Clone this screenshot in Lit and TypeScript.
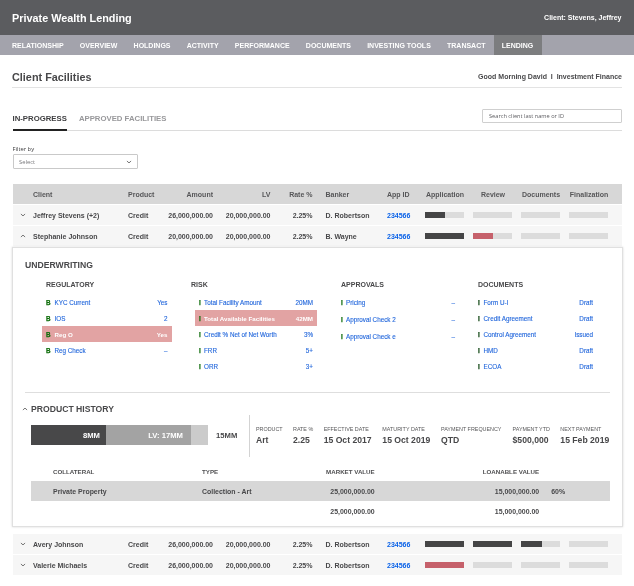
import { LitElement, html, css, svg } from "lit";
import { customElement } from "lit/decorators.js";
import { classMap } from "lit/directives/class-map.js";

interface Stage { fill: number; alert?: boolean }
interface Facility {
  client: string; product: string; amount: string; lv: string; rate: string;
  banker: string; id: string; open?: boolean; stages: Stage[];
}
interface Check { mark: string; label: string; value: string; alert?: boolean }
interface Group { title: string; kind: string; items: Check[] }

const none: Stage = { fill: 0 };

const facilities: Facility[] = [
  { client: "Jeffrey Stevens (+2)", product: "Credit", amount: "26,000,000.00", lv: "20,000,000.00", rate: "2.25%", banker: "D. Robertson", id: "234566", stages: [{ fill: 52 }, none, none, none] },
  { client: "Stephanie Johnson", product: "Credit", amount: "20,000,000.00", lv: "20,000,000.00", rate: "2.25%", banker: "B. Wayne", id: "234566", open: true, stages: [{ fill: 100 }, { fill: 52, alert: true }, none, none] },
  { client: "Avery Johnson", product: "Credit", amount: "26,000,000.00", lv: "20,000,000.00", rate: "2.25%", banker: "D. Robertson", id: "234566", stages: [{ fill: 100 }, { fill: 100 }, { fill: 53 }, none] },
  { client: "Valerie Michaels", product: "Credit", amount: "26,000,000.00", lv: "20,000,000.00", rate: "2.25%", banker: "D. Robertson", id: "234566", stages: [{ fill: 100, alert: true }, none, none, none] },
];

const groups: Group[] = [
  { title: "REGULATORY", kind: "regulatory", items: [
    { mark: "B", label: "KYC Current", value: "Yes" },
    { mark: "B", label: "IOS", value: "2" },
    { mark: "B", label: "Reg O", value: "Yes", alert: true },
    { mark: "B", label: "Reg Check", value: "–" },
  ] },
  { title: "RISK", kind: "risk", items: [
    { mark: "I", label: "Total Facility Amount", value: "20MM" },
    { mark: "I", label: "Total Available Facilities", value: "42MM", alert: true },
    { mark: "I", label: "Credit % Net of Net Worth", value: "3%" },
    { mark: "I", label: "FRR", value: "5+" },
    { mark: "I", label: "ORR", value: "3+" },
  ] },
  { title: "APPROVALS", kind: "approvals", items: [
    { mark: "I", label: "Pricing", value: "–" },
    { mark: "I", label: "Approval Check 2", value: "–" },
    { mark: "I", label: "Approval Check e", value: "–" },
  ] },
  { title: "DOCUMENTS", kind: "documents", items: [
    { mark: "I", label: "Form U-I", value: "Draft" },
    { mark: "I", label: "Credit Agreement", value: "Draft" },
    { mark: "I", label: "Control Agreement", value: "Issued" },
    { mark: "I", label: "HMD", value: "Draft" },
    { mark: "I", label: "ECOA", value: "Draft" },
  ] },
];

const facts = [
  ["PRODUCT", "Art"], ["RATE %", "2.25"], ["EFFECTIVE DATE", "15 Oct 2017"],
  ["MATURITY DATE", "15 Oct 2019"], ["PAYMENT FREQUENCY", "QTD"],
  ["PAYMENT YTD", "$500,000"], ["NEXT PAYMENT", "15 Feb 2019"],
];

const chevron = (up = false) => html`<svg class="chevron" width="6" height="4" viewBox="0 0 6 4">
  ${svg`<path d=${up ? "M0.9 3 L3 1.1 L5.1 3" : "M0.9 1 L3 2.9 L5.1 1"} fill="none" stroke="#5c5c5c" stroke-width="0.85"/>`}
</svg>`;

@customElement("app-root")
export class AppRoot extends LitElement {
  static styles = css`
    :host {
      display: block; height: 586px; overflow: hidden; background: #fff; color: #48484a;
      font: bold 7px/10px "Liberation Sans", Arial, sans-serif; white-space: nowrap;
    }
    * { box-sizing: border-box; }
    .top { height: 35px; background: #5b5c5f; color: #fff; display: flex; justify-content: space-between; align-items: center; padding: 0 12.5px 0 12px; }
    .brand { font-size: 10.85px; line-height: 14px; }
    .top, .nav { filter: brightness(1); }
    .nav { height: 20px; background: #a3a3ac; color: #fff; display: flex; padding-left: 12px; }
    .nav span { line-height: 21px; margin-right: 16.2px; }
    .nav .current { background: #7c7d7f; margin: 0 0 0 -8px; padding: 0 8.5px 0 8px; }
    .page { padding: 0 12px 0 12.5px; filter: brightness(1); }
    .heading { height: 32.5px; display: flex; justify-content: space-between; align-items: center; padding-top: 11.5px; border-bottom: 1px solid #e3e3e3; margin-left: -.5px; }
    .heading h1 { margin: 0; font-size: 10.85px; line-height: 14px; }
    .tabs { height: 43.5px; display: flex; align-items: flex-end; border-bottom: 1px solid #dcdcdc; font-size: 7.78px; }
    .tab { height: 18px; line-height: 14.5px; color: #98989b; margin-right: 12px; }
    .tab.on { color: #3e3e40; border-bottom: 2px solid #222; margin-bottom: -1px; height: 19px; }
    .search { margin-left: auto; align-self: flex-end; margin-bottom: 7px; width: 140px; height: 14px; border: 1px solid #cfcfcf; border-radius: 1px; padding-left: 6px; font: 5.65px/12px "Open Sans", sans-serif; color: #5c5c60; }
    .filter { padding-top: 13px; height: 53px; font: 5.8px/10px "Open Sans", sans-serif; color: #3b3b3d; }
    .select { width: 125.5px; height: 15px; border: 1px solid #c9c9c9; border-radius: 1px; display: flex; justify-content: space-between; align-items: center; padding: 0 5.5px 0 5.5px; color: #77777a; }
    .row { display: grid; height: 20px; align-items: center; background: #f6f6f6; margin-bottom: 1px;
      grid-template-columns: 20.5px 95px 40px 45px 57.5px 42px 13px 61.5px 38px 40px 8px 40px 8px 40px 8px 40px; }
    .row > * { min-width: 0; }
    .row > span { padding-top: 1.6px; }
    .row.head { background: #d7d7d7; color: #565658; }
    .row .chevron { justify-self: center; }
    .num { text-align: right; }
    .c8 { grid-column: 8; }
    .s0 { grid-column: 10; } .s1 { grid-column: 12; } .s2 { grid-column: 14; } .s3 { grid-column: 16; }
    .head .stage { display: flex; justify-content: center; }
    .id { color: #0a62e8; }
    .bar { height: 6px; background: #dcdcdc; width: 39px; }
    .bar i { display: block; height: 100%; background: #454546; }
    .bar i.alert { background: #c6616b; }
    .card { height: 280px; margin: 1px -.5px 7px; border: 1px solid #e0e0e0; box-shadow: 0 0 2px rgba(0,0,0,.16); background: #fff; padding: 0 12px; }
    h2 { margin: 0; font-size: 8.65px; line-height: 12px; font-weight: bold; }
    .under { height: 144.5px; padding-top: 11.4px; border-bottom: 1px solid #dedede; }
    .groups { display: flex; }
    .group h3 { margin: 0 0 5.1px; font-size: 7px; line-height: 10px; padding-top: 8.2px; height: 18px; }
    .regulatory { margin-left: 17px; width: 129.5px; }
    .risk { margin-left: 23.5px; width: 122px; }
    .approvals { margin-left: 20px; width: 122px; }
    .documents { margin-left: 15px; width: 123px; }
    .regulatory h3, .approvals h3, .documents h3 { padding-left: 4px; }
    .risk h3 { margin-left: -4px; }
    .check { display: flex; height: 15.9px; align-items: center; padding: 1.4px 4px 0; color: #2468dc; font-weight: normal; font-size: 6.3px; -webkit-text-stroke: .12px currentColor; }
    .check b { color: #106e0c; width: 8.5px; font-size: 6.3px; -webkit-text-stroke: .25px currentColor; }
    .risk .check b, .approvals .check b { width: 5px; }
    .documents .check b { width: 5.5px; color: #0d4410; }
    .check em { margin-left: auto; font-style: normal; }
    .check.alert { background: #e2a3a3; color: #fff; font-weight: bold; font-size: 6.2px; -webkit-text-stroke: 0; }
    .approvals .check { height: 16.9px; padding-top: .4px; }
    .history { display: flex; align-items: center; gap: 3.5px; margin-left: -3.5px; padding-top: 10.6px; }
    .summary { display: flex; height: 42px; padding-left: 6px; }
    .split { display: flex; flex: none; height: 20px; margin-top: 10.4px; color: #fff; font-size: 7.67px; line-height: 21.5px; text-align: right; }
    .paid { width: 75px; background: #484849; padding-right: 6px; }
    .value { width: 85px; background: #a3a3a3; padding-right: 8px; }
    .rest { width: 17px; background: #cbcbcb; }
    .total { flex: none; width: 41.2px; margin-top: 10.4px; font-size: 7.67px; line-height: 21.5px; padding-left: 8px; }
    .facts { flex: none; display: grid; grid-template-columns: 37px 30.7px 58.7px 58.6px 71.6px 47.8px 52px; align-content: start; border-left: 1px solid #d3d3d3; padding: 9.4px 0 0 5.8px; }
    .facts small { display: block; font: 5.4px/10px "Liberation Sans", Arial, sans-serif; color: #58585a; }
    .facts strong { display: block; font-size: 8.65px; line-height: 12px; }
    .line { display: grid; grid-template-columns: 22px 149px 123px 49.7px 164.5px 12px 1fr; height: 20px; align-items: center; margin-left: 6px; font-size: 6.95px; padding-top: 1px; }
    .line.title { font-size: 6.18px; margin-top: 4.3px; color: #505052; padding-top: 2px; }
    .line.item { background: #d7d7d7; margin-right: -.5px; }
    .line :first-child { grid-column: 2; }
    .line .market { grid-column: 4; display: flex; justify-content: flex-end; }
    .line .loan { grid-column: 5; text-align: right; }
    .line .pct { grid-column: 7; }
  `;

  private row(f: Facility) {
    return html`<div class="row">
      ${chevron(f.open)}<span>${f.client}</span><span>${f.product}</span>
      <span class="num">${f.amount}</span><span class="num">${f.lv}</span><span class="num">${f.rate}</span>
      <span class="c8">${f.banker}</span><span class="id">${f.id}</span>
      ${f.stages.map((s, i) => html`<div class="bar s${i}"><i class=${classMap({ alert: !!s.alert })} style="width:${s.fill}%"></i></div>`)}
    </div>`;
  }

  private card() {
    return html`<section class="card">
      <div class="under">
        <h2>UNDERWRITING</h2>
        <div class="groups">${groups.map(g => html`<div class="group ${g.kind}"><h3>${g.title}</h3>
          ${g.items.map(c => html`<div class=${classMap({ check: true, alert: !!c.alert })}><b>${c.mark}</b><span>${c.label}</span><em>${c.value}</em></div>`)}
        </div>`)}</div>
      </div>
      <div class="history">${chevron(true)}<h2>PRODUCT HISTORY</h2></div>
      <div class="summary">
        <div class="split"><div class="paid">8MM</div><div class="value">LV: 17MM</div><div class="rest"></div></div>
        <div class="total">15MM</div>
        <div class="facts">${facts.map(([k, v]) => html`<div><small>${k}</small><strong>${v}</strong></div>`)}</div>
      </div>
      <div class="line title"><span>COLLATERAL</span><span>TYPE</span><span class="market">MARKET VALUE</span><span class="loan">LOANABLE VALUE</span></div>
      <div class="line item"><span>Private Property</span><span>Collection - Art</span><span class="market">25,000,000.00</span><span class="loan">15,000,000.00</span><span class="pct">60%</span></div>
      <div class="line"><span></span><span class="market">25,000,000.00</span><span class="loan">15,000,000.00</span></div>
    </section>`;
  }

  render() {
    const links = ["RELATIONSHIP", "OVERVIEW", "HOLDINGS", "ACTIVITY", "PERFORMANCE", "DOCUMENTS", "INVESTING TOOLS", "TRANSACT"];
    return html`
      <header class="top"><span class="brand">Private Wealth Lending</span><span>Client: Stevens, Jeffrey</span></header>
      <nav class="nav">${links.map(l => html`<span>${l}</span>`)}<span class="current">LENDING</span></nav>
      <main class="page">
        <div class="heading"><h1>Client Facilities</h1><span>Good Morning David &nbsp;I&nbsp; Investment Finance</span></div>
        <div class="tabs"><span class="tab on">IN-PROGRESS</span><span class="tab">APPROVED FACILITIES</span><div class="search">Search client last name or ID</div></div>
        <div class="filter">Filter by<div class="select"><span>Select</span>${chevron()}</div></div>
        <div class="row head">
          <span></span><span>Client</span><span>Product</span><span class="num">Amount</span><span class="num">LV</span><span class="num">Rate %</span>
          <span class="c8">Banker</span><span>App ID</span>
          ${["Application", "Review", "Documents", "Finalization"].map((t, i) => html`<span class="stage s${i}">${t}</span>`)}
        </div>
        ${facilities.slice(0, 2).map(f => this.row(f))}
        ${this.card()}
        ${facilities.slice(2).map(f => this.row(f))}
      </main>`;
  }
}
